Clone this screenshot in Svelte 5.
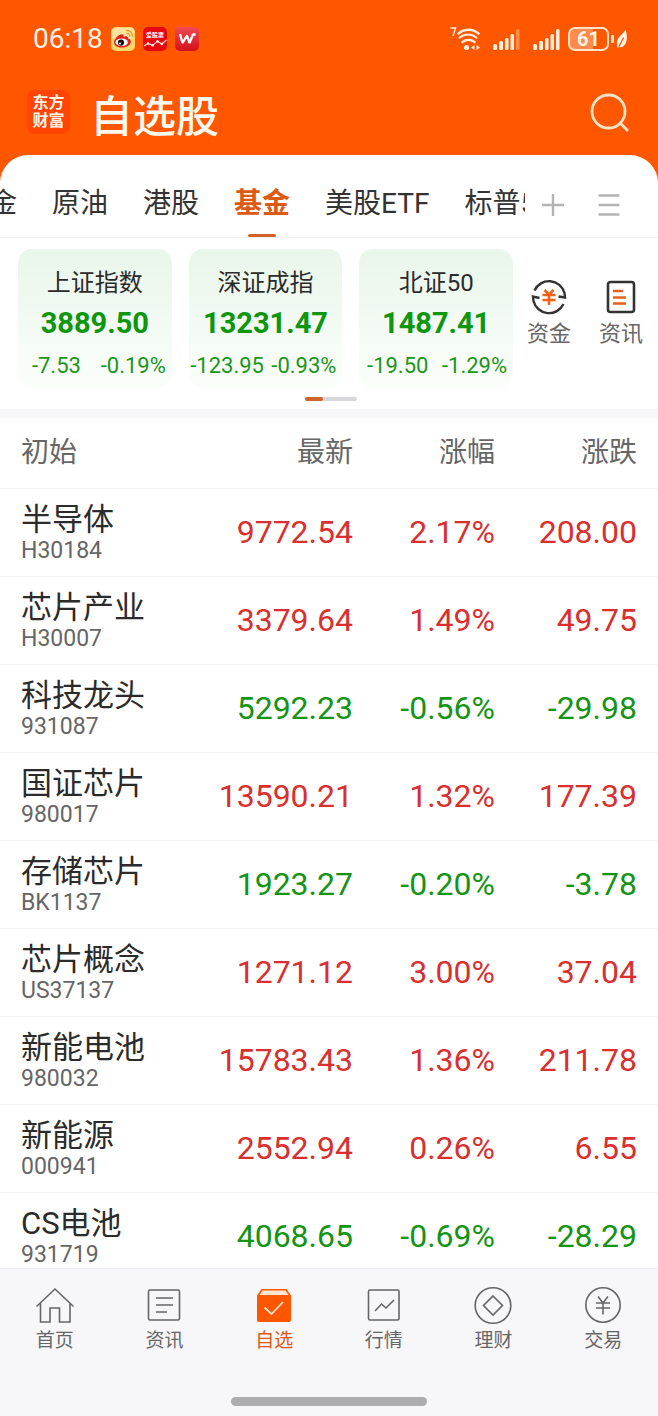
<script>
  const tabs = ['黄金', '原油', '港股', '基金', '美股ETF', '标普500'];
  let activeTab = $state('基金');

  const indices = [
    { name: '上证指数', value: '3889.50', change: '-7.53', pct: '-0.19%' },
    { name: '深证成指', value: '13231.47', change: '-123.95', pct: '-0.93%' },
    { name: '北证50', value: '1487.41', change: '-19.50', pct: '-1.29%' },
  ];

  const rows = [
    { name: '半导体', code: 'H30184', last: '9772.54', pct: '2.17%', change: '208.00' },
    { name: '芯片产业', code: 'H30007', last: '3379.64', pct: '1.49%', change: '49.75' },
    { name: '科技龙头', code: '931087', last: '5292.23', pct: '-0.56%', change: '-29.98' },
    { name: '国证芯片', code: '980017', last: '13590.21', pct: '1.32%', change: '177.39' },
    { name: '存储芯片', code: 'BK1137', last: '1923.27', pct: '-0.20%', change: '-3.78' },
    { name: '芯片概念', code: 'US37137', last: '1271.12', pct: '3.00%', change: '37.04' },
    { name: '新能电池', code: '980032', last: '15783.43', pct: '1.36%', change: '211.78' },
    { name: '新能源', code: '000941', last: '2552.94', pct: '0.26%', change: '6.55' },
    { name: 'CS电池', code: '931719', last: '4068.65', pct: '-0.69%', change: '-28.29' },
  ];

  const nav = [
    { id: 'home', label: '首页' },
    { id: 'news', label: '资讯' },
    { id: 'watch', label: '自选' },
    { id: 'market', label: '行情' },
    { id: 'wealth', label: '理财' },
    { id: 'trade', label: '交易' },
  ];
  let page = $state('watch');

  const isDown = (v) => v.startsWith('-');
</script>

{#snippet bars(weak)}
  <svg width="32" height="24" viewBox="-4 0 32 24" fill="#ffefdc">
    <rect x="1" y="17" width="4" height="6" rx="1.500" />
    <rect x="7" y="14" width="4" height="9" rx="1.500" />
    <rect x="13" y="11" width="3.500" height="12" rx="1.500" />
    <rect x="18.500" y="7" width="3.500" height="16" rx="1.500" />
    <rect x="24" y="2" width="3.500" height="21" rx="1.500" opacity={weak ? 0.35 : 1} />
  </svg>
{/snippet}

<div class="app">
  <header class="top">
    <div class="status">
      <span class="time">06:18</span>
      <!-- weibo -->
      <svg width="24" height="24" viewBox="0 0 24 24">
        <rect width="24" height="24" rx="5" fill="#fdd56b" />
        <rect x="1" y="1" width="22" height="11" rx="4" fill="#ffe3a0" />
        <path d="M3 15.500c0-3.600 5-8.700 8.300-8.300 1.300.2 1.400 1.500 1 2.600 2.200-1 4.800-1 4.700 1.600 2.300.7 2.800 1.900 2.800 3.300 0 3.200-4.100 5.800-8.800 5.800-4.600 0-8-1.900-8-5z" fill="#e0201b" />
        <ellipse cx="10.700" cy="15.300" rx="6.200" ry="3.900" fill="#fff" />
        <circle cx="10" cy="15.600" r="3.100" fill="#111" />
        <circle cx="9" cy="16.400" r="1" fill="#fff" />
        <path d="M15.500 3.600c3.600-.6 6.500 2.300 5.700 6.300M15.800 6.400c1.900-.2 3.200 1.200 2.800 3" fill="none" stroke="#f79a1e" stroke-width="1.300" stroke-linecap="round" />
      </svg>
      <!-- stock app -->
      <svg width="24" height="24" viewBox="0 0 24 24">
        <rect width="24" height="24" rx="5" fill="#e8090f" />
        <text x="12" y="10" text-anchor="middle" font-size="6" font-weight="700" fill="#fff">爱股票</text>
        <path d="M1 19l4-2.600 4.500 2 5-4.200 4.300 2.800L23.500 13" fill="none" stroke="#ffd9d0" stroke-width="1.200" />
        <g fill="#fff"><circle cx="5" cy="16.400" r="1.200" /><circle cx="9.500" cy="18.400" r="1.200" /><circle cx="14.500" cy="14.200" r="1.200" /><circle cx="18.800" cy="17" r="1.200" /></g>
      </svg>
      <!-- wps -->
      <svg width="24" height="24" viewBox="0 0 24 24">
        <defs>
          <linearGradient id="wps" x1="0" y1="0" x2="0" y2="1">
            <stop offset="0" stop-color="#f04a55" />
            <stop offset="1" stop-color="#d4101a" />
          </linearGradient>
        </defs>
        <rect width="24" height="24" rx="5" fill="url(#wps)" />
        <path d="M5 7l2.500 9L12 8.500l2.500 7.500L18 7.500h2.500" fill="none" stroke="#fff" stroke-width="2.300" stroke-linejoin="bevel" />
      </svg>

      <div class="signals">
        <svg width="30" height="26" viewBox="0 0 30 26" fill="none" stroke="#ffefdc">
          <path d="M0.500 2h5l-2.500 8" stroke-width="1.500" />
          <g stroke-width="2.400" stroke-linecap="round">
            <path d="M8.500 7.500c6-5 14-5 20 0" />
            <path d="M8 12.200c6-5 14-5 20 0" transform="translate(2.700 1.300) scale(0.85)" />
            <path d="M12.500 16c3.500-2.800 8.500-2.800 12 0" />
          </g>
          <circle cx="16.500" cy="21.500" r="2.600" fill="#ffefdc" stroke="none" />
          <path d="M21 21.500l3.500-2.500v5zM30 21.500l-3.500-2.500v5z" fill="#ffefdc" stroke="none" />
        </svg>
        {@render bars(true)}
        {@render bars(false)}
        <div class="power">
          <div class="battery">61</div>
          <div class="battery-cap"></div>
          <svg width="12" height="20" viewBox="0 0 12 20">
            <path d="M9.500 1C11.500 6 12 15 6 18c-1 .4-2 .4-2.800-.2L1.500 19l-.3-2C-.5 9 5 7 9.500 1z" fill="#fff4e6" />
            <path d="M3 17.500L7.500 8.500" stroke="#ff5600" stroke-width="1.200" />
          </svg>
        </div>
      </div>
    </div>

    <div class="title-bar">
      <div class="logo"><span>东方</span><span>财富</span></div>
      <h1>自选股</h1>
      <button class="search" aria-label="搜索">
        <svg width="42" height="42" viewBox="0 0 42 42" fill="none" stroke="#ffe3c6" stroke-width="2.800">
          <circle cx="19.500" cy="19.500" r="16.500" />
          <path d="M31 31l8 8" />
        </svg>
      </button>
    </div>
  </header>

  <main class="sheet">
    <div class="tabs">
      <div class="tab-scroll">
        <div class="tab-list">
          {#each tabs as t}
            <button class="tab" class:active={t === activeTab} onclick={() => (activeTab = t)}>{t}</button>
          {/each}
        </div>
      </div>
      <div class="tools">
        <button aria-label="添加">
          <svg width="24" height="24" viewBox="0 0 24 24" stroke="#b4b4b4" stroke-width="2.400"><path d="M1 12h22M12 1v22" /></svg>
        </button>
        <button aria-label="管理">
          <svg width="24" height="24" viewBox="0 0 24 24" stroke="#b4b4b4" stroke-width="2.400"><path d="M1.500 2.500h21M1.500 12h21M1.500 21.500h21" /></svg>
        </button>
      </div>
    </div>

    <section class="indices">
      <div class="cards">
        {#each indices as i}
          <div class="card">
            <div class="card-name">{i.name}</div>
            <div class="card-value">{i.value}</div>
            <div class="card-change"><span>{i.change}</span><span>{i.pct}</span></div>
          </div>
        {/each}
      </div>
      <div class="shortcuts">
        <a class="shortcut" href="#funds">
          <svg width="38" height="38" viewBox="0 0 38 38" fill="none" stroke="#333" stroke-width="2.400">
            <path d="M4.500 12.500A16 16 0 0 1 34.500 15l.5 4.500-6.500-1" />
            <path d="M33.500 26A16 16 0 0 1 3.500 23L3 18.500l6.500 1.500" />
            <path d="M14.500 12l4.500 4.500 4.500-4.500M19 16v11M12.500 17h13M12.500 22h13" stroke="#f2601a" stroke-width="2.600" />
          </svg>
          资金
        </a>
        <a class="shortcut" href="#info">
          <svg width="38" height="38" viewBox="0 0 38 38" fill="none" stroke="#333" stroke-width="2.600">
            <rect x="6" y="4" width="26" height="30" rx="2.500" />
            <path d="M11 13h10M11 19.500h13M11 25.500h13" stroke="#e8601f" />
          </svg>
          资讯
        </a>
      </div>
      <div class="pager"><span></span></div>
    </section>

    <div class="list">
      <table>
        <thead>
          <tr><th class="c-name">初始</th><th class="c-last">最新</th><th>涨幅</th><th>涨跌</th></tr>
        </thead>
        <tbody>
          {#each rows as r}
            <tr class:down={isDown(r.pct)}>
              <td class="c-name">
                <div class="name">{r.name}</div>
                <div class="code">{r.code}</div>
              </td>
              <td class="num">{r.last}</td>
              <td class="num">{r.pct}</td>
              <td class="num">{r.change}</td>
            </tr>
          {/each}
        </tbody>
      </table>
    </div>
  </main>

  <nav class="nav">
    <div class="nav-items">
      {#each nav as n}
        <a href="#{n.id}" class="nav-item" class:active={n.id === page} onclick={() => (page = n.id)}>
          <svg width="40" height="40" viewBox="0 0 40 40" fill="none" stroke="currentColor" stroke-width="1.600">
            {#if n.id === 'home'}
              <path d="M1.500 21.500L20 4l18.500 17.500M5.500 18.500V37H15V23h9.500v14H35V18.500" />
            {:else if n.id === 'news'}
              <rect x="4.500" y="5" width="31" height="30" rx="1.500" />
              <path d="M12 13h17M12 20h17M12 27h11" />
            {:else if n.id === 'watch'}
              <path d="M7.500 4h25L37 10.500V35a2 2 0 0 1-2 2H5a2 2 0 0 1-2-2V10.500z" fill="#ff5600" stroke="none" />
              <path d="M8.500 5.500h23l3 4.500h-29z" fill="#ffe6d2" stroke="none" />
              <path d="M10.500 22.500l7 6.500 11.500-12" stroke="#ffe6d2" stroke-width="1.800" />
            {:else if n.id === 'market'}
              <rect x="4.500" y="5" width="30.500" height="30" rx="1.500" />
              <path d="M11 26l6.500-7 4.500 4 8-8" />
            {:else if n.id === 'wealth'}
              <circle cx="20" cy="20.500" r="17.800" />
              <path d="M20 11l9.500 9.500L20 30l-9.500-9.500z" />
            {:else}
              <circle cx="20" cy="20" r="17.200" />
              <path d="M15 11.500l5 6.500 5-6.500M20 18v11.500M13 18h14M13 23h14" />
            {/if}
          </svg>
          {n.label}
        </a>
      {/each}
    </div>
    <div class="home-bar"></div>
  </nav>
</div>

<style>
  :global(body) {
    background: #f7f7fa;
  }

  .app {
    display: flex;
    flex-direction: column;
    height: 100vh;
    overflow: hidden;
    background: #ff5600;
    font-family: Roboto, 'Noto Sans CJK SC', sans-serif;
    color: #2b2b2b;
  }

  button {
    font-family: inherit;
    background: none;
    border: 0;
    padding: 0;
    cursor: pointer;
  }
  a {
    color: inherit;
    text-decoration: none;
  }
  svg {
    display: block;
    flex: none;
  }

  /* header */
  .status {
    display: flex;
    align-items: center;
    gap: 8px;
    height: 78px;
    padding: 0 30px 0 33px;
  }
  .time {
    font-size: 28px;
    line-height: 32px;
    color: #fff4e6;
  }
  .signals {
    display: flex;
    align-items: center;
    gap: 8px;
    margin-left: auto;
  }
  .power {
    display: flex;
    align-items: center;
    gap: 2px;
  }
  .battery {
    box-sizing: border-box;
    width: 41px;
    height: 24px;
    border: 2px solid #ffe3c6;
    border-radius: 7px;
    background: linear-gradient(90deg, #ff8a4d 62%, transparent 62%);
    color: #fff4e6;
    font-size: 20px;
    line-height: 20px;
    font-weight: 700;
    text-align: center;
  }
  .battery-cap {
    width: 3px;
    height: 8px;
    border-radius: 1px;
    background: #ffe3c6;
  }

  .title-bar {
    display: flex;
    align-items: center;
    height: 77px;
    padding: 0 27px;
  }
  .logo {
    display: flex;
    flex-direction: column;
    align-items: center;
    justify-content: center;
    width: 43px;
    height: 44px;
    margin-bottom: 10px;
    border-radius: 8px;
    background: #ff4405;
    color: #fff4e6;
    font-size: 16px;
    line-height: 18px;
    font-weight: 700;
  }
  h1 {
    margin: 0 0 0 20px;
    font-size: 43px;
    line-height: 50px;
    font-weight: 500;
    color: #fff8ee;
  }
  .search { margin: 0 0 8px auto; }

  /* tabs */
  .sheet {
    flex: 1;
    min-height: 0;
    display: flex;
    flex-direction: column;
    background: #fff;
    border-radius: 28px 28px 0 0;
    overflow: hidden;
  }
  .tabs {
    display: flex;
    flex: none;
    height: 82px;
    border-bottom: 1px solid #f2f2f2;
  }
  .tab-scroll {
    flex: 1;
    min-width: 0;
    overflow: hidden;
  }
  .tab-list {
    display: flex;
    gap: 35px;
    margin-left: -39px;
  }
  .tab {
    position: relative;
    flex: none;
    height: 82px;
    padding-top: 16px;
    box-sizing: border-box;
    color: #333;
    font-size: 28px;
    line-height: 40px;
    white-space: nowrap;
  }
  .tab.active {
    color: #dc5a14;
    font-weight: 700;
  }
  .tab.active::after {
    content: '';
    position: absolute;
    left: 50%;
    bottom: 0;
    width: 28px;
    height: 3px;
    margin-left: -14px;
    border-radius: 2px;
    background: #d4612a;
  }
  .tools {
    display: flex;
    align-items: center;
    gap: 32px;
    padding: 18px 37px 0 16px;
  }

  /* indices */
  .indices {
    display: grid;
    grid-template-columns: 1fr auto;
    flex: none;
    padding: 11px 15px 8px 18px;
    border-bottom: 9px solid #f7f7fa;
  }
  .cards {
    display: grid;
    grid-template-columns: repeat(3, 1fr);
    gap: 17px;
  }
  .card {
    height: 139px;
    border-radius: 14px;
    background: linear-gradient(#e9f6ea, #fbfefb);
    text-align: center;
  }
  .card-name {
    padding-top: 16px;
    font-size: 24px;
    line-height: 36px;
  }
  .card-value {
    font-size: 29px;
    line-height: 44px;
    font-weight: 700;
    color: #0e960e;
  }
  .card-change {
    display: grid;
    grid-template-columns: 1fr 1fr;
    font-size: 22px;
    line-height: 42px;
    color: #1a961a;
    white-space: nowrap;
  }
  .shortcuts {
    display: flex;
    gap: 28px;
    padding: 29px 0 0 14px;
  }
  .shortcut {
    display: flex;
    flex-direction: column;
    align-items: center;
    gap: 2px;
    font-size: 22px;
    line-height: 32px;
    color: #666;
  }
  .pager {
    grid-column: 1 / -1;
    justify-self: center;
    width: 52px;
    height: 4px;
    margin-top: 9px;
    border-radius: 2px;
    background: #d8d8dc;
  }
  .pager span {
    display: block;
    width: 18px;
    height: 4px;
    border-radius: 2px;
    background: #cf622a;
  }

  /* quotes */
  .list {
    flex: 1;
    min-height: 0;
    overflow: hidden;
  }
  table {
    width: 100%;
    table-layout: fixed;
    border-collapse: collapse;
  }
  th, td {
    box-sizing: border-box;
    padding: 0 21px 0 0;
    border-bottom: 1px solid #f2f2f2;
    text-align: right;
  }
  th {
    width: 142px;
    height: 70px;
    color: #666;
    font-size: 28px;
    line-height: 40px;
    font-weight: 400;
  }
  th.c-name, td.c-name {
    width: auto;
    padding-left: 21px;
    padding-right: 0;
    text-align: left;
  }
  th.c-last { width: 182px; }
  td {
    height: 88px;
  }
  .name {
    font-size: 31px;
    line-height: 38px;
    white-space: nowrap;
  }
  .code {
    font-size: 23px;
    line-height: 24px;
    color: #666;
  }
  .num {
    font-size: 32px;
    line-height: 40px;
    color: #d92f2f;
  }
  .down .num { color: #149414; }

  /* bottom nav */
  .nav {
    flex: none;
    height: 148px;
    box-sizing: border-box;
    border-top: 1px solid #ececee;
    background: #f7f7fa;
  }
  .nav-items {
    display: grid;
    grid-template-columns: repeat(6, 1fr);
    padding-top: 16px;
  }
  .nav-item {
    display: flex;
    flex-direction: column;
    align-items: center;
    gap: 2px;
    font-size: 19px;
    line-height: 28px;
    color: #666;
  }
  .nav-item.active { color: #dc5a14; }
  .home-bar {
    width: 196px;
    height: 9px;
    margin: 42px auto 0;
    border-radius: 5px;
    background: #adadb0;
  }
</style>
